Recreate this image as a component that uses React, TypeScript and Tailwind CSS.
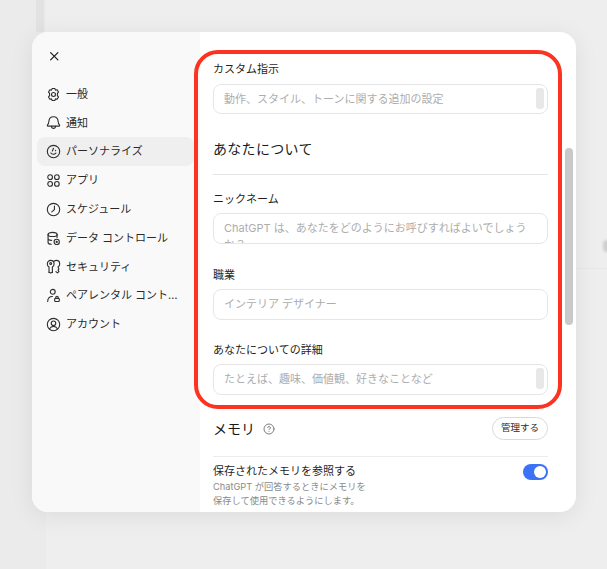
import { X, CircleHelp } from 'lucide-react'
import type { ReactNode } from 'react'

const font = 'font-["Inter","Noto_Sans_CJK_JP",sans-serif]'

function Ico({ children }: { children: ReactNode }) {
  return (
    <svg viewBox="0 0 16 16" fill="none" stroke="#2f2f2f" strokeWidth="1.2" strokeLinecap="round" strokeLinejoin="round" className="w-[15px] h-[15px] shrink-0">
      {children}
    </svg>
  )
}

const menuItems: { label: string; icon: ReactNode; active?: boolean }[] = [
  {
    label: '一般',
    icon: (
      <Ico>
        <path d="M6.600 1.600h2.800l.7 1.700 1.800-.3 1.400 2.400-1.100 1.400.0 2.400 1.100 1.400-1.400 2.400-1.800-.3-.7 1.700H6.600l-.7-1.700-1.800.3-1.400-2.400 1.100-1.400V6.800L2.700 5.400 4.100 3l1.800.3z" />
        <circle cx="8" cy="8" r="2.100" />
      </Ico>
    ),
  },
  {
    label: '通知',
    icon: (
      <Ico>
        <path d="M8 1.800c-3 0-4.700 2.200-4.900 4.800-.1 1.700-.6 3-1.500 4-.4.500-.1 1.200.5 1.200h11.800c.6 0 .9-.7.500-1.200-.9-1-1.400-2.300-1.500-4C12.700 4 11 1.800 8 1.800z" />
        <path d="M5.800 12c.1 1.400 1 2.300 2.200 2.300s2.100-.9 2.200-2.300" />
      </Ico>
    ),
  },
  {
    label: 'パーソナライズ',
    active: true,
    icon: (
      <Ico>
        <circle cx="8" cy="8" r="6.600" />
        <path d="M8 4.600 6.800 7.400M5.200 9.600c1 1.600 3.800 1.800 5.400.1M10.200 6.600v.5" />
      </Ico>
    ),
  },
  {
    label: 'アプリ',
    icon: (
      <Ico>
        <circle cx="4.400" cy="4.400" r="2.500" />
        <circle cx="11.600" cy="4.400" r="2.500" />
        <circle cx="4.400" cy="11.600" r="2.500" />
        <circle cx="11.600" cy="11.600" r="2.500" />
      </Ico>
    ),
  },
  {
    label: 'スケジュール',
    icon: (
      <Ico>
        <circle cx="8" cy="8" r="6.600" />
        <path d="M9 4.200V8.200L6.200 10.600" />
      </Ico>
    ),
  },
  {
    label: 'データ コントロール',
    icon: (
      <Ico>
        <ellipse cx="7" cy="3.600" rx="4.800" ry="2.200" />
        <path d="M2.200 3.600v8.600c0 1 1.400 1.800 3.400 2M11.800 3.600v3.200M2.200 8c0 1 1.600 1.900 3.800 2" />
        <circle cx="11.400" cy="11.600" r="2.800" />
        <circle cx="11.400" cy="11.600" r=".6" />
      </Ico>
    ),
  },
  {
    label: 'セキュリティ',
    icon: (
      <Ico>
        <circle cx="5" cy="4.800" r="1" />
        <path d="M3.200 14.200V8.600C2 7.800 1.400 6.600 1.400 5.200 1.400 3 3 1.400 5 1.400s3.600 1.600 3.600 3.800c0 1.400-.6 2.600-1.800 3.400v5.600" />
        <path d="M8.600 2.400c.6-.6 1.400-1 2.400-1 2 0 3.600 1.600 3.600 3.800 0 1.400-.6 2.600-1.800 3.400l1 2-1 1.200 1 1.600-1.600 1.400-1.600-1.400" />
        <path d="M3.200 14.200 5 15l1.800-.8" />
      </Ico>
    ),
  },
  {
    label: 'ペアレンタル コントロール',
    icon: (
      <Ico>
        <circle cx="7.200" cy="4" r="2.600" />
        <path d="M1.800 14.400c0-3.200 2-5.400 5-5.400" />
        <rect x="9.200" y="11" width="5" height="3.400" rx="1" />
        <path d="M10.400 11v-.9a1.300 1.300 0 0 1 2.600 0v.9" />
      </Ico>
    ),
  },
  {
    label: 'アカウント',
    icon: (
      <Ico>
        <circle cx="8" cy="8" r="6.600" />
        <circle cx="8" cy="6.600" r="2.400" />
        <path d="M3.800 12.600c1-1.800 2.400-2.600 4.200-2.600s3.200.8 4.200 2.600" />
      </Ico>
    ),
  },
]

function Field({ placeholder, height, thumb }: { placeholder: string; height: string; thumb?: boolean }) {
  return (
    <div className="relative">
      <textarea
        readOnly
        placeholder={placeholder}
        className={`block w-full ${height} resize-none overflow-hidden rounded-lg border border-[#e6e6e6] bg-white pl-[10px] pr-[10px] pt-[6px] text-[11px] leading-[17px] placeholder:text-[#adadad] outline-none`}
      />
      {thumb && <div className="absolute right-[4px] top-[4px] w-[8px] h-[21px] rounded-[3px] bg-[#e8e8e8]" />}
    </div>
  )
}

function Label({ children, className }: { children: ReactNode; className: string }) {
  return <p className={`text-[11px] leading-[16px] text-[#1f1f1f] ${className}`}>{children}</p>
}

export default function App() {
  return (
    <div className={`relative w-[607px] h-[569px] overflow-hidden bg-[#ebebeb] pt-[32px] pl-[32px] ${font}`}>
      {/* 背景のうっすらした部分 */}
      <div className="absolute left-[36px] top-0 w-[8px] h-[32px] bg-[#e2e2e2]" />
      <div className="absolute left-[46px] top-0 bottom-0 w-[561px] bg-[#eeeeee]" />
      <div className="absolute left-[576px] top-[268px] right-0 h-px bg-[#e8e8e8]" />
      <div className="absolute left-[603px] top-[240px] w-[8px] h-[12px] rounded-full bg-[#cfcfcf] blur-[1px]" />

      <div className="relative flex w-[544px] h-[480px] overflow-hidden rounded-2xl bg-white shadow-[0_4px_24px_rgba(0,0,0,0.08)]">
        <aside className="w-[168px] shrink-0 bg-[#f9f9f9] px-[5px]">
          <div className="h-[47.700px] pt-[17px] pl-[10px]">
            <X className="w-[14.500px] h-[14.500px] text-[#1f1f1f]" strokeWidth={2} />
          </div>
          <nav>
            {menuItems.map((item) => (
              <div
                key={item.label}
                className={`flex items-center gap-[5px] w-[157px] h-[28.800px] pl-[9px] pr-[8px] rounded-lg text-[11px] text-[#2a2a2a] ${item.active ? 'bg-[#efefef]' : ''}`}
              >
                {item.icon}
                <span className="truncate">{item.label}</span>
              </div>
            ))}
          </nav>
        </aside>

        <main className="relative flex-1 overflow-hidden pl-[13px] pr-[28px] pt-[29px]">
          <Label className="">カスタム指示</Label>
          <div className="mt-[7px]">
            <Field placeholder="動作、スタイル、トーンに関する追加の設定" height="h-[30px]" thumb />
          </div>

          <h2 className="mt-[25px] text-[14px] leading-[20px] tracking-[0.3px] text-[#1a1a1a]">あなたについて</h2>
          <div className="mt-[15px] h-px bg-[#e5e5e5]" />

          <Label className="mt-[16px]">ニックネーム</Label>
          <div className="mt-[6px]">
            <Field placeholder="ChatGPT は、あなたをどのようにお呼びすればよいでしょうか？" height="h-[31px]" />
          </div>

          <Label className="mt-[23px]">職業</Label>
          <div className="mt-[6px]">
            <Field placeholder="インテリア デザイナー" height="h-[31px]" />
          </div>

          <Label className="mt-[22px]">あなたについての詳細</Label>
          <div className="mt-[6px]">
            <Field placeholder="たとえば、趣味、価値観、好きなことなど" height="h-[31px]" thumb />
          </div>

          <div className="mt-[22px] flex items-center justify-between h-[23px]">
            <div className="flex items-center gap-[8px]">
              <span className="text-[14px] leading-[20px] text-[#1a1a1a]">メモリ</span>
              <CircleHelp className="w-[12px] h-[12px] text-[#555555]" strokeWidth={1.5} />
            </div>
            <button className="w-[56px] h-[23px] rounded-full border border-[#d9d9d9] bg-white text-[9.500px] text-[#2a2a2a]">管理する</button>
          </div>

          <div className="mt-[16px] h-px bg-[#ececec]" />

          <div className="mt-[6px] flex items-start justify-between">
            <div>
              <Label className="">保存されたメモリを参照する</Label>
              <p className="mt-[1px] text-[9.250px] leading-[14px] text-[#8a8a8a]">
                ChatGPT が回答するときにメモリを
                <br />
                保存して使用できるようにします。
              </p>
            </div>
            <div className="mt-[1px] flex w-[25px] h-[16px] items-center justify-end rounded-full bg-[#3b72f6] pr-[2px]">
              <div className="w-[12px] h-[12px] rounded-full bg-white" />
            </div>
          </div>

          {/* スクロールバー */}
          <div className="absolute right-[3px] top-[116px] w-[8px] h-[177px] rounded-full bg-[#c9c9c9]" />
        </main>
      </div>

      {/* 赤い注釈枠 */}
      <div className="absolute left-[194px] top-[50px] w-[368px] h-[359px] rounded-[24px] border-[4px] border-[#fb3320]" />
    </div>
  )
}
